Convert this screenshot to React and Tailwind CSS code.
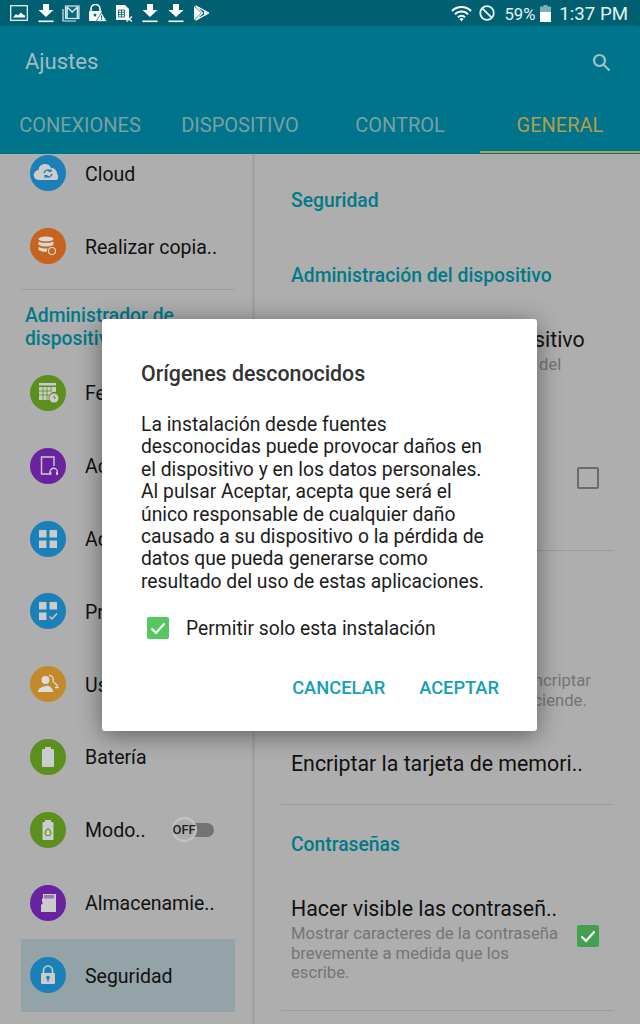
import React from 'react';

const Download = () => (
  <svg width="16" height="19" viewBox="0 0 16 19" fill="#fff">
    <path d="M5 0h6v6h4.500L8 13 .5 6H5z" />
    <rect x="0.5" y="16.5" width="15" height="1.600" />
  </svg>
);

const StatusLeft = () => (
  <div className="flex items-center">
    <svg className="ml-[10px]" width="18" height="16" viewBox="0 0 18 16" fill="none">
      <rect x="0.7" y="0.7" width="16.600" height="14.600" stroke="#e6f0f2" strokeWidth="1.300" />
      <path d="M3 12.500l3-3.500 2 1.500 3-3 2 2 2 1v2z" fill="#fff" />
    </svg>
    <span className="ml-[10px]"><Download /></span>
    <svg className="ml-[8px]" width="18" height="17" viewBox="0 0 18 17" fill="none" stroke="#dbe9ec" strokeWidth="1.200">
      <path d="M1 4v12h13" />
      <rect x="3.500" y="1" width="13.500" height="12.500" fill="#0a6a7b" />
      <path d="M5 2l5.200 5L15.500 2M5 2v11M15.500 2v11" strokeWidth="1.600" />
    </svg>
    <svg className="ml-[8px]" width="19" height="18" viewBox="0 0 19 18">
      <path d="M3 7V5a4.500 4.500 0 019 0v2" stroke="#fff" strokeWidth="1.600" fill="none" />
      <rect x="1" y="7" width="13" height="10" rx="1" fill="#fff" />
      <circle cx="7" cy="11" r="1.500" fill="#0a6a7b" />
      <path d="M13.500 8.500L19 17.500H8z" fill="#fff" stroke="#0a6a7b" strokeWidth="0.800" />
      <rect x="13" y="11.500" width="1.100" height="3" fill="#0a6a7b" />
      <rect x="13" y="15" width="1.100" height="1.100" fill="#0a6a7b" />
    </svg>
    <svg className="ml-[8px]" width="18" height="18" viewBox="0 0 18 18">
      <path d="M1 1h9l4 4v10a1 1 0 01-1 1H1z" fill="#fff" />
      <path d="M3.500 6h6v7h-6zM3.500 8.300h6M3.500 10.600h6M6.500 6v7" stroke="#0a6a7b" strokeWidth="0.900" fill="none" />
      <path d="M11.500 12.500l5.500 5M17 12.500l-5.500 5" stroke="#fff" strokeWidth="1.300" />
    </svg>
    <span className="ml-[9px]"><Download /></span>
    <span className="ml-[10px]"><Download /></span>
    <svg className="ml-[9px]" width="16" height="16" viewBox="0 0 16 16">
      <path d="M1 1l7 7-7 7z" fill="#fff" />
      <path d="M2.500 0.800L15.500 8 2.500 15.200 9.500 8z" fill="none" stroke="#fff" strokeWidth="1.200" />
      <path d="M11 6.200L15.500 8 11 9.800z" fill="#fff" />
    </svg>
  </div>
);

const StatusRight = () => (
  <div className="flex items-center text-[#e4f0f2]">
    <svg width="21" height="17" viewBox="0 0 21 17" fill="none" stroke="#fff" strokeWidth="2">
      <path d="M1 6a13.500 13.500 0 0119 0M4 9.300a9 9 0 0113 0M7 12.300a4.500 4.500 0 017 0" />
      <path d="M10.500 16.500l-2-2.500a3 3 0 014 0z" fill="#fff" stroke="none" />
    </svg>
    <svg className="ml-[7px]" width="16" height="16" viewBox="0 0 16 16" fill="none" stroke="#e8f2f4" strokeWidth="1.800">
      <circle cx="8" cy="8" r="6.800" />
      <path d="M3.300 3.300l9.400 9.400" />
    </svg>
    <span className="ml-[9px] pt-[2px] text-[16.67px]">59%</span>
    <svg className="ml-[5px]" width="11" height="17" viewBox="0 0 11 17">
      <path d="M3.500 0h4v1.500H11V17H0V1.500h3.500z" fill="#7fb0ba" />
      <rect y="7" width="11" height="10" fill="#fff" />
    </svg>
    <span className="ml-[8px] mr-[12px] pt-[2px] text-[18.67px]">1:37 PM</span>
  </div>
);

const Tab = ({ label, active }) => (
  <div className={`flex-1 h-[45px] mb-[1px] pt-[5px] text-center text-[20px] leading-[24px] ${active ? 'text-[#b39c4e] border-b-2 border-[#b39c4e]' : 'text-[#7b9fa7]'}`}>
    {label}
  </div>
);

const glyphs = {
  cloud: (
    <>
      <path d="M9 25a5 5 0 01-.5-10 6.500 6.500 0 0112.500-2 5.500 5.500 0 016 5.500A5.500 5.500 0 0127 25z" fill="#ccc" />
      <path d="M14 18a4 4 0 016.500-2M22 19a4 4 0 01-6.500 2" stroke="#1b7fb8" strokeWidth="1.400" fill="none" />
      <path d="M21.500 13.500v3.500h-3.500M14.500 23.500v-3.500h3.500" fill="#1b7fb8" />
    </>
  ),
  backup: (
    <>
      <ellipse cx="16" cy="11" rx="7.500" ry="2.500" fill="#d8d8d8" />
      <path d="M8.500 13.500q7.500 3 15 0v3.500q-7.500 3-15 0zM8.500 19q5 2 9 1.500l-1 3.500q-5 0-8-2z" fill="#d8d8d8" />
      <circle cx="22" cy="23" r="3.500" fill="#c8621f" stroke="#d8d8d8" strokeWidth="1.200" />
    </>
  ),
  date: (
    <>
      <rect x="9" y="8" width="17" height="2.500" fill="#ccc" />
      <path d="M9 12h17v5a6 6 0 00-7 8H9z" fill="#ccc" />
      <path d="M9 16h13M9 20h10M13 12v13M17 12v13M21 12v4" stroke="#5b8f1e" strokeWidth="0.800" />
      <circle cx="24" cy="23" r="4.500" fill="#ccc" />
      <path d="M24 20.500V23h2" stroke="#5b8f1e" strokeWidth="1" fill="none" />
    </>
  ),
  accessory: (
    <>
      <path d="M19 26h-7.500V9H24v9" stroke="#ccc" strokeWidth="1.400" fill="none" />
      <path d="M20 26v-2a3.700 3.700 0 017.400 0v2" stroke="#ccc" strokeWidth="1.400" fill="none" />
      <rect x="19.300" y="24" width="2" height="3" fill="#ccc" />
      <rect x="26" y="24" width="2" height="3" fill="#ccc" />
    </>
  ),
  apps: (
    <>
      <rect x="9" y="9" width="7.500" height="7.500" fill="#ccc" />
      <rect x="19.500" y="9" width="7.500" height="7.500" fill="#ccc" />
      <rect x="9" y="19.500" width="7.500" height="7.500" fill="#ccc" />
      <rect x="19.500" y="19.500" width="7.500" height="7.500" fill="#ccc" />
    </>
  ),
  defaults: (
    <>
      <rect x="9" y="9" width="7.500" height="7.500" fill="#ccc" />
      <rect x="19.500" y="9" width="7.500" height="7.500" fill="#ccc" />
      <rect x="9" y="19.500" width="7.500" height="7.500" fill="#ccc" />
      <path d="M19.500 23.500l2.500 2.500 5-5.500" stroke="#ccc" strokeWidth="1.500" fill="none" />
    </>
  ),
  users: (
    <>
      <circle cx="15.500" cy="14" r="4" fill="#ddd" />
      <path d="M8 26c0-4 4-5 7.500-6s7.500 2 7.500 6z" fill="#ddd" />
      <path d="M19 9.500a4 4 0 014 5.500c0 2 5 3 5 6.500h-3" stroke="#ddd" strokeWidth="1.300" fill="none" />
    </>
  ),
  battery: (
    <>
      <rect x="15" y="8" width="6" height="2" fill="#ccc" />
      <rect x="12" y="10" width="12" height="18" rx="1" fill="#ccc" />
    </>
  ),
  saver: (
    <>
      <rect x="15" y="8" width="6" height="2" fill="#ccc" />
      <rect x="12.500" y="10" width="11" height="18" rx="0.800" fill="#ccc" />
      <path d="M15 21l2-4h2l2 4-1.500 2.500h-3z" stroke="#5b8f1e" strokeWidth="1.100" fill="none" />
    </>
  ),
  storage: (
    <>
      <path d="M13 9h13v18H11v-7l2-2-1-1v-3l1-1z" fill="#ccc" />
      <path d="M15 10v3.500M17 10v3.500M19 10v3.500M21 10v3.500M23 10v3.500" stroke="#6a23a0" strokeWidth="1" />
    </>
  ),
  lock: (
    <>
      <path d="M13.500 16v-2.500a4.500 4.500 0 019 0V16" stroke="#ccc" strokeWidth="1.600" fill="none" />
      <rect x="11" y="16" width="14" height="11" rx="1" fill="#ccc" />
      <circle cx="18" cy="20.500" r="1.800" fill="#1b7fb8" />
      <rect x="17.300" y="21" width="1.400" height="3.500" fill="#1b7fb8" />
    </>
  ),
};

const Row = ({ bg, icon, label, selected, children }) => (
  <div className={`h-[72.8px] flex items-center pl-[9px] text-[19.5px] text-[#111] ${selected ? 'bg-[#93a3a8]' : ''}`}>
    <svg className="shrink-0" width="36" height="36" viewBox="0 0 36 36">
      <circle cx="18" cy="18" r="18" fill={bg} />
      {glyphs[icon]}
    </svg>
    <span className="ml-[19px] pt-[2px] whitespace-nowrap">{label}</span>
    {children}
  </div>
);

const Toggle = () => (
  <div className="relative ml-[26px] w-[42px] h-[14px] rounded-full bg-[#737373]">
    <div className="absolute left-0 top-[-6px] w-[25px] h-[25px] rounded-full bg-[#adadad] border-2 border-[#c4c4c4] flex items-center justify-center text-[13px] font-medium text-[#222]">
      OFF
    </div>
  </div>
);

const SectionTitle = ({ className, children }) => (
  <div className={`text-[19.3px] leading-[24px] font-medium text-[#007a88] ${className}`}>{children}</div>
);

const Check = ({ color }) => (
  <svg width="22" height="22" viewBox="0 0 22 22" className="shrink-0">
    <rect width="22" height="22" rx="2" fill={color} />
    <path d="M4.500 11.500l4.500 4.500 8.500-9.500" stroke="#fff" strokeWidth="2.200" fill="none" />
  </svg>
);

const SettingRow = ({ title, sub, right, className }) => (
  <div className={`flex items-center justify-between ${className}`}>
    <div>
      <div className="text-[21.33px] leading-[26px] text-[#111] whitespace-nowrap">{title}</div>
      <div className="mt-[2px] text-[16.67px] leading-[19.5px] text-[#757575] whitespace-nowrap">{sub}</div>
    </div>
    {right}
  </div>
);

const Divider = ({ className }) => <div className={`h-px bg-[#9c9c9c] ${className}`} />;

const App = () => {
  return (
    <div className="relative h-screen overflow-hidden bg-[#aeaeae] font-['Roboto',sans-serif]">
      <div className="h-[26px] bg-[#005f70] flex items-center justify-between">
        <StatusLeft />
        <StatusRight />
      </div>

      <div className="h-[128px] bg-[#00748a] flex flex-col justify-between">
        <div className="flex items-center justify-between pt-[23px] pl-[25px] pr-[29px]">
          <span className="text-[22px] leading-[26px] text-[#a3bcc3]">Ajustes</span>
          <svg width="19" height="19" viewBox="0 0 19 19" fill="none" stroke="#a3bcc3" strokeWidth="2.200">
            <circle cx="7.500" cy="7.500" r="5.500" />
            <path d="M11.500 11.500l6 6" />
          </svg>
        </div>
        <div className="flex items-start">
          <Tab label="CONEXIONES" />
          <Tab label="DISPOSITIVO" />
          <Tab label="CONTROL" />
          <Tab label="GENERAL" active />
        </div>
      </div>

      <div className="flex h-[870px]">
        <div className="w-[252px] shrink-0 pl-[21px] pr-[17px] -mt-[17px]">
          <Row bg="#1b7fb8" icon="cloud" label="Cloud" />
          <Row bg="#c8621f" icon="backup" label="Realizar copia.." />
          <Divider className="mt-[6px]" />
          <div className="pl-[4px] pt-[14px] pb-[7px] text-[19.3px] leading-[23px] font-medium text-[#007a88]">
            Administrador de<br />dispositivos
          </div>
          <Row bg="#5b8f1e" icon="date" label="Fecha y hora" />
          <Row bg="#6a23a0" icon="accessory" label="Accesorios" />
          <Row bg="#1b7fb8" icon="apps" label="Administrador" />
          <Row bg="#1b7fb8" icon="defaults" label="Predeterminadas" />
          <Row bg="#c28a2a" icon="users" label="Usuarios" />
          <Row bg="#5b8f1e" icon="battery" label="Batería" />
          <Row bg="#5b8f1e" icon="saver" label="Modo..">
            <Toggle />
          </Row>
          <Row bg="#6a23a0" icon="storage" label="Almacenamie.." />
          <Row bg="#1b7fb8" icon="lock" label="Seguridad" selected />
        </div>

        <div className="w-[3px] shrink-0 bg-[#a2a2a2]" />

        <div className="flex-1 min-w-0 px-[26px]">
          <div className="pl-[10px]">
            <SectionTitle className="pt-[35px]">Seguridad</SectionTitle>
            <SectionTitle className="pt-[51px]">Administración del dispositivo</SectionTitle>
            <SettingRow
              className="pt-[39px]"
              title="Administradores de dispositivo"
              sub={<>Ver o desactivar administradores del<br />dispositivo.</>}
            />
            <SettingRow
              className="pt-[50px] pr-[15px]"
              title="Orígenes desconocidos"
              sub={<>Permitir la instalación de<br />aplicaciones desconocidas.</>}
              right={<div className="w-[22px] h-[22px] rounded-[2px] border-2 border-[#6b6b6b] shrink-0" />}
            />
          </div>
          <Divider className="mt-[39px]" />
          <div className="pl-[10px]">
            <SectionTitle className="pt-[38px]">Encriptación</SectionTitle>
            <SettingRow
              className="pt-[30px]"
              title="Encriptar dispositivo"
              sub={<>Para proteger sus datos, puede encriptar<br />el dispositivo cada vez que se enciende.</>}
            />
            <div className="pt-[41px] pb-[27px] text-[21.33px] leading-[26px] text-[#111] whitespace-nowrap">Encriptar la tarjeta de memori..</div>
          </div>
          <Divider />
          <div className="pl-[10px]">
            <SectionTitle className="pt-[28px]">Contraseñas</SectionTitle>
            <SettingRow
              className="pt-[39px] pr-[15px]"
              title="Hacer visible las contraseñ.."
              sub={<>Mostrar caracteres de la contraseña<br />brevemente a medida que los<br />escribe.</>}
              right={<div className="-mt-[7px]"><Check color="#43a04e" /></div>}
            />
          </div>
          <Divider className="mt-[27px]" />
        </div>
      </div>

      <div className="absolute top-[26px] inset-x-0 bottom-0 pr-px flex items-center justify-center">
        <div className="w-[435px] h-[412px] bg-white rounded-[3px] shadow-[0_4px_24px_rgba(0,0,0,0.45)] pt-[42px] pl-[39px] pr-[38px]">
          <div className="text-[21.33px] leading-[26px] font-medium text-[#333]">Orígenes desconocidos</div>
          <p className="mt-[27px] text-[19.3px] leading-[22.4px] text-[#1c1c1c] whitespace-nowrap">
            La instalación desde fuentes<br />
            desconocidas puede provocar daños en<br />
            el dispositivo y en los datos personales.<br />
            Al pulsar Aceptar, acepta que será el<br />
            único responsable de cualquier daño<br />
            causado a su dispositivo o la pérdida de<br />
            datos que pueda generarse como<br />
            resultado del uso de estas aplicaciones.
          </p>
          <div className="mt-[23px] pl-[6px] flex items-center">
            <Check color="#55c662" />
            <span className="ml-[17px] pt-[2px] text-[19.3px] leading-[22px] text-[#1c1c1c]">Permitir solo esta instalación</span>
          </div>
          <div className="mt-[36px] flex justify-end gap-[34px] text-[18.3px] leading-[24px] font-medium text-[#12a0b8]">
            <button>CANCELAR</button>
            <button>ACEPTAR</button>
          </div>
        </div>
      </div>
    </div>
  );
};

export default App;
